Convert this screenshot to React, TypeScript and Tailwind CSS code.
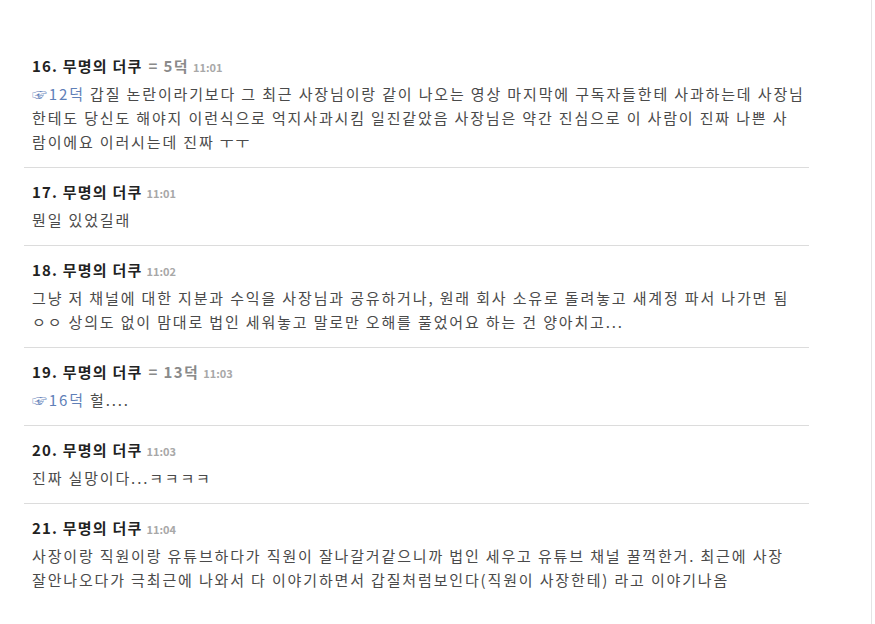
// ─── Comment thread ───────────────────────────────────────────────────────────
import React from "react";

interface Comment {
  no: number;
  reply?: string;          // "= 5덕" style reference
  time: string;
  quote?: string;          // "☞12덕" link at the start of the body
  lines: string[];
}

const comments: Comment[] = [
  {
    no: 16,
    reply: "5덕",
    time: "11:01",
    quote: "☞12덕",
    lines: [
      " 갑질 논란이라기보다 그 최근 사장님이랑 같이 나오는 영상 마지막에 구독자들한테 사과하는데 사장님",
      "한테도 당신도 해야지 이런식으로 억지사과시킴 일진같았음 사장님은 약간 진심으로 이 사람이 진짜 나쁜 사",
      "람이에요 이러시는데 진짜 ㅜㅜ",
    ],
  },
  { no: 17, time: "11:01", lines: ["뭔일 있었길래"] },
  {
    no: 18,
    time: "11:02",
    lines: [
      "그냥 저 채널에 대한 지분과 수익을 사장님과 공유하거나, 원래 회사 소유로 돌려놓고 새계정 파서 나가면 됨",
      "ㅇㅇ 상의도 없이 맘대로 법인 세워놓고 말로만 오해를 풀었어요 하는 건 양아치고...",
    ],
  },
  { no: 19, reply: "13덕", time: "11:03", quote: "☞16덕", lines: [" 헐...."] },
  { no: 20, time: "11:03", lines: ["진짜 실망이다...ㅋㅋㅋㅋ"] },
  {
    no: 21,
    time: "11:04",
    lines: [
      "사장이랑 직원이랑 유튜브하다가 직원이 잘나갈거같으니까 법인 세우고 유튜브 채널 꿀꺽한거. 최근에 사장",
      "잘안나오다가 극최근에 나와서 다 이야기하면서 갑질처럼보인다(직원이 사장한테) 라고 이야기나옴",
    ],
  },
];

function CommentItem({ c, last }: { c: Comment; last: boolean }) {
  return (
    <li className={`px-2 pt-[14px] pb-[13px] ${last ? "" : "border-b border-[#dcdcdc]"}`}>
      <div className="flex items-baseline h-5 leading-5 whitespace-nowrap">
        <span className="text-[15px] font-bold tracking-[1.2px] text-[#222]">{c.no}. 무명의 더쿠</span>
        {c.reply && (
          <span className="ml-[6px] text-[15px] font-semibold tracking-[1.4px] text-[#8a8a8a]">= {c.reply}</span>
        )}
        <span className="ml-[4px] text-[11px] font-semibold text-[#a8a8a8]">{c.time}</span>
      </div>
      <div className="mt-[6px] text-[15px] leading-6 tracking-[1.85px] text-[#4a4a4a] whitespace-nowrap">
        {c.lines.map((line, i) => (
          <div key={i}>
            {i === 0 && c.quote && <span className="text-[#5f80b8]">{c.quote}</span>}
            {line}
          </div>
        ))}
      </div>
    </li>
  );
}

export default function App() {
  return (
    <div
      className="w-[872px] h-[624px] bg-white border-r border-[#e4e4e4] overflow-hidden"
      style={{ fontFamily: '"Noto Sans CJK KR", "Noto Sans", sans-serif' }}
    >
      <ul className="ml-6 w-[785px] pt-[42px]">
        {comments.map((c, i) => (
          <CommentItem key={c.no} c={c} last={i === comments.length - 1} />
        ))}
      </ul>
    </div>
  );
}
